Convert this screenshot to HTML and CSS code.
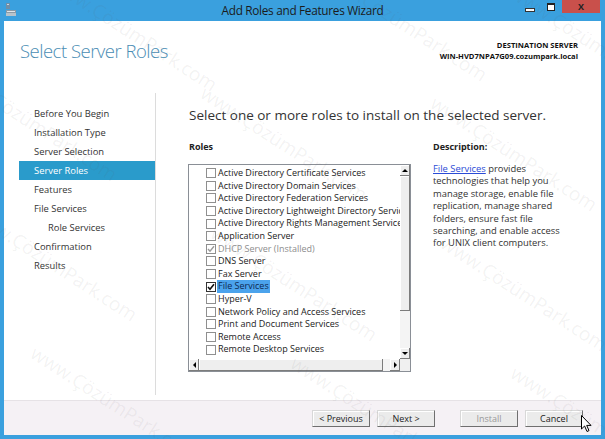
FILE: index.html
```html
<!DOCTYPE html>
<html lang="en">
<head>
    <meta charset="UTF-8">
    <title>Add Roles and Features Wizard</title>
    <link rel="stylesheet" href="styles.css">
</head>
<body>
    <div class="window">
        <div class="titlebar">
            <svg class="app-icon" width="12" height="13" viewBox="0 0 12 13">
                <rect x="1" y="0" width="4" height="6" fill="#6f8fa8"/>
                <rect x="2" y="1" width="2" height="1" fill="#c9d8e4"/>
                <rect x="1" y="7" width="10" height="3" fill="#8a9aa6"/>
                <rect x="1" y="10" width="10" height="3" fill="#b7c2ca"/>
                <rect x="2" y="8" width="8" height="1" fill="#dfe6eb"/>
            </svg>
            <div class="title">Add Roles and Features Wizard</div>
            <div class="caption-buttons">
                <span class="cap-min"></span>
                <span class="cap-max"></span>
                <span class="cap-close">X</span>
            </div>
        </div>

        <div class="client">
            <div class="header">
                <h1>Select Server Roles</h1>
                <div class="dest">
                    <div>DESTINATION SERVER</div>
                    <div>WIN-HVD7NPA7G09.cozumpark.local</div>
                </div>
            </div>

            <div class="content">
                <ul class="steps">
                    <li>Before You Begin</li>
                    <li>Installation Type</li>
                    <li>Server Selection</li>
                    <li class="active">Server Roles</li>
                    <li>Features</li>
                    <li>File Services</li>
                    <li class="sub">Role Services</li>
                    <li>Confirmation</li>
                    <li>Results</li>
                </ul>

                <div class="main">
                    <h2>Select one or more roles to install on the selected server.</h2>
                    <div class="columns">
                        <div class="roles">
                            <div class="label">Roles</div>
                            <div class="listbox">
                                <ul class="role-list">
                                    <li><span class="check"></span>Active Directory Certificate Services</li>
                                    <li><span class="check"></span>Active Directory Domain Services</li>
                                    <li><span class="check"></span>Active Directory Federation Services</li>
                                    <li><span class="check"></span>Active Directory Lightweight Directory Services</li>
                                    <li><span class="check"></span>Active Directory Rights Management Services</li>
                                    <li><span class="check"></span>Application Server</li>
                                    <li class="disabled"><span class="check checked"><svg width="8" height="8" viewBox="0 0 8 8"><path d="M1 4 L3 6.2 L7 1.2" fill="none" stroke="#9a9a9a" stroke-width="1.4"/></svg></span>DHCP Server (Installed)</li>
                                    <li><span class="check"></span>DNS Server</li>
                                    <li><span class="check"></span>Fax Server</li>
                                    <li class="selected"><span class="check checked"><svg width="8" height="8" viewBox="0 0 8 8"><path d="M1 4 L3 6.2 L7 1.2" fill="none" stroke="#111" stroke-width="1.6"/></svg></span><span class="item-text">File Services</span></li>
                                    <li><span class="check"></span>Hyper-V</li>
                                    <li><span class="check"></span>Network Policy and Access Services</li>
                                    <li><span class="check"></span>Print and Document Services</li>
                                    <li><span class="check"></span>Remote Access</li>
                                    <li><span class="check"></span>Remote Desktop Services</li>
                                </ul>
                                <div class="vscroll">
                                    <span class="sb-btn"><i class="arrow-up"></i></span>
                                    <span class="sb-thumb-v"></span>
                                    <span class="sb-track"></span>
                                    <span class="sb-btn"><i class="arrow-down"></i></span>
                                </div>
                                <div class="hscroll">
                                    <span class="sb-btn"><i class="arrow-left"></i></span>
                                    <span class="sb-thumb-h"></span>
                                    <span class="sb-track"></span>
                                    <span class="sb-btn"><i class="arrow-right"></i></span>
                                </div>
                                <div class="sb-corner"></div>
                            </div>
                        </div>

                        <div class="description">
                            <div class="label">Description:</div>
                            <p><a href="#">File Services</a> provides technologies that help you manage storage, enable file replication, manage shared folders, ensure fast file searching, and enable access for UNIX client computers.</p>
                        </div>
                    </div>
                </div>
            </div>

            <div class="footer">
                <button class="btn">&lt; Previous</button>
                <button class="btn">Next &gt;</button>
                <button class="btn btn-install" disabled>Install</button>
                <button class="btn">Cancel</button>
            </div>
        </div>

        <!-- watermark and mouse pointer sit over the window -->
        <div class="watermark">
            <span style="left:60px; top:-30px">www.ÇözümPark.com</span>
            <span style="left:330px; top:-40px">www.ÇözümPark.com</span>
            <span style="left:520px; top:-20px">www.ÇözümPark.com</span>
            <span style="left:-40px; top:60px">www.ÇözümPark.com</span>
            <span style="left:210px; top:80px">www.ÇözümPark.com</span>
            <span style="left:440px; top:90px">www.ÇözümPark.com</span>
            <span style="left:-20px; top:200px">www.ÇözümPark.com</span>
            <span style="left:220px; top:220px">www.ÇözümPark.com</span>
            <span style="left:450px; top:230px">www.ÇözümPark.com</span>
            <span style="left:40px; top:340px">www.ÇözümPark.com</span>
            <span style="left:300px; top:350px">www.ÇözümPark.com</span>
            <span style="left:520px; top:360px">www.ÇözümPark.com</span>
        </div>
        <svg class="pointer" width="12" height="18" viewBox="0 0 12 18">
            <path d="M0.5 0.5 L0.5 14 L3.6 11 L6 16.5 L8 15.6 L5.7 10.4 L10 10.4 Z" fill="#fff" stroke="#000" stroke-width="1"/>
        </svg>
    </div>
</body>
</html>
```

FILE: styles.css
```css
body {
    margin: 0;
    width: 605px;
    height: 439px;
    overflow: hidden;
    font-family: "Open Sans", "Noto Sans", sans-serif;
    color: #333;
}

.window {
    position: relative;
    height: 100%;
    display: flex;
    flex-direction: column;
    background: #3aa0de;
    overflow: hidden;
}

/* title bar */
.titlebar {
    height: 21px;
    display: grid;
    grid-template-columns: 1fr auto 1fr;
    align-items: start;
}

.app-icon {
    margin: 3px 0 0 5px;
}

.title {
    font-size: 11.8px;
    letter-spacing: -0.3px;
    line-height: 20px;
    color: #1b1b1b;
}

.caption-buttons {
    display: flex;
    justify-content: flex-end;
    align-items: flex-start;
    padding-right: 5px;
}

.cap-min {
    width: 8px;
    height: 2px;
    margin: 8px 12px 0 0;
    background: #fff;
    border: 1px solid #333;
}

.cap-max {
    width: 6px;
    height: 5px;
    margin: 3px 7px 0 0;
    background: #fff;
    border: 1px solid #222;
    border-top-width: 2px;
    box-shadow: inset 0 0 0 1px #fff;
}

.cap-close {
    width: 38px;
    height: 13px;
    background: #c9504b;
    color: #222;
    font-size: 9px;
    font-weight: 700;
    line-height: 13px;
    text-align: center;
}

/* white client area */
.client {
    flex: 1;
    margin: 0 4px 4px;
    background: #fff;
    display: flex;
    flex-direction: column;
    min-height: 0;
}

.header {
    height: 72px;
    box-sizing: border-box;
    padding: 0 23px 0 16px;
    display: flex;
    justify-content: space-between;
    align-items: flex-start;
}

.header h1 {
    margin: 16px 0 0;
    font-size: 18.5px;
    letter-spacing: -0.5px;
    font-weight: 300;
    line-height: 28px;
    color: #4a8db4;
}

.dest {
    margin-top: 19px;
    text-align: right;
    font-size: 7.6px;
    font-weight: 700;
    line-height: 11px;
    color: #111;
}

.content {
    flex: 1;
    display: flex;
    min-height: 0;
}

.steps {
    width: 152px;
    box-sizing: border-box;
    margin: 0 0 5px;
    padding: 11px 0 0 15px;
    list-style: none;
    border-right: 1px solid #dcdcdc;
}

.steps li {
    height: 19px;
    line-height: 19px;
    padding-left: 15px;
    font-size: 9.4px;
    color: #333;
}

.steps li.sub {
    padding-left: 29px;
}

.steps li.active {
    background: #2a9bcb;
    color: #fff;
}

.main {
    flex: 1;
    padding: 12px 0 0 33px;
}

.main h2 {
    margin: 0;
    font-size: 13.5px;
    font-weight: 400;
    line-height: 20px;
    color: #333;
}

.columns {
    display: flex;
    margin-top: 15px;
}

.label {
    font-size: 9px;
    font-weight: 700;
    line-height: 14px;
    color: #222;
}

.roles {
    width: 222px;
}

/* list box with classic scroll bars */
.listbox {
    margin-top: 10px;
    margin-left: -1px;
    height: 208px;
    box-sizing: border-box;
    border: 1px solid #8a8f96;
    display: grid;
    grid-template-columns: 1fr 10px;
    grid-template-rows: 1fr 12px;
    overflow: hidden;
}

.role-list {
    margin: 0;
    padding: 2px 0 0 17px;
    list-style: none;
    overflow: hidden;
    min-width: 0;
}

.role-list li {
    height: 12.6px;
    line-height: 12.6px;
    font-size: 9px;
    white-space: nowrap;
    color: #222;
    display: flex;
    align-items: center;
}

.role-list li.disabled {
    color: #8d8d8d;
}

.check {
    flex: none;
    width: 8px;
    height: 8px;
    margin-right: 2px;
    border: 1px solid #8f8f8f;
    background: #fff;
    display: flex;
    align-items: center;
    justify-content: center;
}

.check svg {
    display: block;
}

.role-list li.selected .check {
    border-color: #333;
}

.item-text {
    background: #4ba3ec;
    color: #0e2a52;
    padding: 0 1px;
    margin-left: -1px;
}

.vscroll {
    display: flex;
    flex-direction: column;
    background: #f0f0f0;
}

.hscroll {
    display: flex;
    background: #f0f0f0;
}

.sb-btn {
    flex: none;
    width: 10px;
    height: 11px;
    box-sizing: border-box;
    background: #eeeeee;
    box-shadow: inset -1px -1px #7c7c7c, inset 1px 1px #ffffff;
    display: flex;
    align-items: center;
    justify-content: center;
}

.hscroll .sb-btn {
    height: 12px;
}

.sb-thumb-v {
    flex: none;
    height: 135px;
    background: #eeeeee;
    box-shadow: inset -1px -1px #7c7c7c, inset 1px 1px #ffffff;
}

.sb-thumb-h {
    flex: none;
    width: 184px;
    background: #eeeeee;
    box-shadow: inset -1px -1px #7c7c7c, inset 1px 1px #ffffff;
}

.sb-track {
    flex: 1;
    background: #f4f4f4;
}

.sb-corner {
    background: #f0f0f0;
}

.arrow-up, .arrow-down, .arrow-left, .arrow-right {
    width: 0;
    height: 0;
    border: 3px solid transparent;
}

.arrow-up { border-bottom-color: #000; border-top-width: 0; }
.arrow-down { border-top-color: #000; border-bottom-width: 0; }
.arrow-left { border-right-color: #000; border-left-width: 0; }
.arrow-right { border-left-color: #000; border-right-width: 0; }

.description {
    margin-left: 22px;
    width: 140px;
}

.description p {
    margin: 9px 0 0;
    font-size: 9.4px;
    line-height: 12.4px;
    color: #333;
}

.description a {
    color: #2b4bd6;
}

/* footer buttons */
.footer {
    height: 35px;
    box-sizing: border-box;
    background: #f5f1f5;
    border-top: 1px solid #e6e2e6;
    display: flex;
    justify-content: flex-end;
    align-items: flex-start;
    gap: 7px;
    padding: 9px 18px 0 0;
}

.btn {
    width: 58px;
    height: 17px;
    padding: 0;
    font-family: inherit;
    font-size: 9px;
    color: #222;
    background: #ebebeb;
    border: 1px solid #d8d8d8;
    border-right-color: #6f6f6f;
    border-bottom-color: #6f6f6f;
    box-shadow: inset 1px 1px #fff;
}

.btn-install {
    margin-left: 18px;
    color: #9a9a9a;
}

/* overlays */
.watermark {
    position: absolute;
    inset: 0;
    pointer-events: none;
    overflow: hidden;
}

.watermark span {
    position: absolute;
    font-size: 19px;
    white-space: nowrap;
    color: rgba(90, 90, 90, 0.08);
    transform: rotate(33deg);
    transform-origin: left top;
}

.pointer {
    position: absolute;
    left: 581px;
    top: 415px;
}
```
